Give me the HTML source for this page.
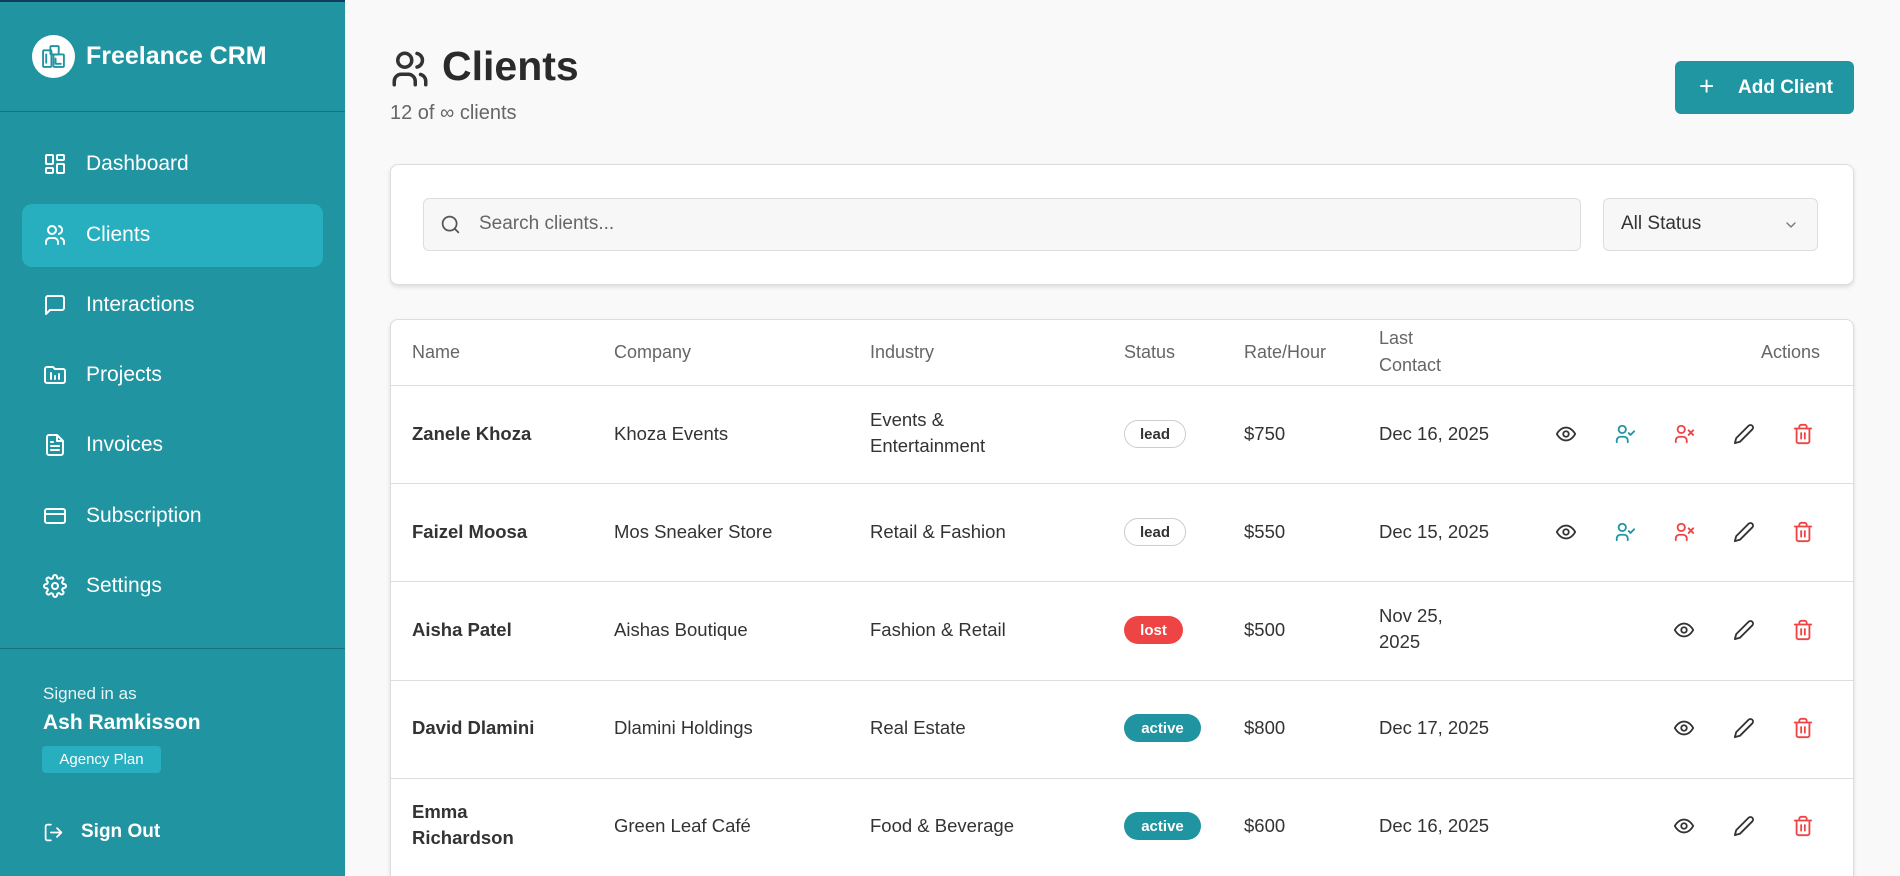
<!DOCTYPE html>
<html style="overflow:hidden;width:1900px;height:876px"><head><meta charset="utf-8"><style>
*{box-sizing:border-box;margin:0;padding:0}
body{width:1900px;height:876px;overflow:hidden;font-family:"Liberation Sans",sans-serif;background:#f9f9f9;position:relative;color:#222}
.abs{position:absolute}
#sb{position:absolute;left:0;top:0;width:345px;height:876px;background:#2094a0;border-top:2px solid #123c5a}
.nav{position:absolute;left:0;width:345px;height:40px;color:#fff;font-size:21px;display:flex;align-items:center}
.nav svg{position:absolute;left:43px}
.nav span{position:absolute;left:86px}
svg{fill:none;stroke-linecap:round;stroke-linejoin:round}
.hd{position:absolute;top:319px;height:66px;display:flex;align-items:center;color:#666;font-size:18px}
.row{position:absolute;left:391px;width:1462px;border-top:1px solid #ddd}
.c{position:absolute;font-size:18.5px;color:#333;line-height:26px}
.badge{position:absolute;height:28px;border-radius:14px;font-size:15px;font-weight:bold;display:flex;align-items:center;justify-content:center}
.ic{position:absolute}
</style></head><body>
<div id="sb">
 <div class="abs" style="left:32px;top:33px;width:43px;height:43px;border-radius:50%;background:#fff"></div>
 <svg class="abs" style="left:41px;top:42px" width="25" height="25" viewBox="0 0 24 24" stroke="#2094a0" stroke-width="1.8"><rect x="2" y="6" width="8" height="16" rx="1"/><rect x="9" y="2" width="8" height="8" rx="1"/><rect x="12" y="10" width="10" height="12" rx="1"/><path d="M5 10v8M14 14v5h5"/></svg>
 <div class="abs" style="left:86px;top:40px;color:#fff;font-size:25px;font-weight:bold">Freelance CRM</div>
 <div class="abs" style="left:0;top:109px;width:345px;height:1px;background:#17727d"></div>
 <div class="abs" style="left:22px;top:202px;width:301px;height:63px;border-radius:10px;background:#27afbf"></div>
 <div class="nav" style="top:142px"><svg width="24" height="24" viewBox="0 0 24 24" stroke="#fff" stroke-width="2"><rect x="3" y="3" width="7" height="9" rx="1"/><rect x="14" y="3" width="7" height="5" rx="1"/><rect x="14" y="12" width="7" height="9" rx="1"/><rect x="3" y="16" width="7" height="5" rx="1"/></svg><span>Dashboard</span></div>
 <div class="nav" style="top:213px"><svg width="24" height="24" viewBox="0 0 24 24" stroke="#fff" stroke-width="2"><circle cx="9" cy="7" r="4"/><path d="M3 21v-2a4 4 0 0 1 4-4h4a4 4 0 0 1 4 4v2M16 3.1a4 4 0 0 1 0 7.8M21 21v-2a4 4 0 0 0-3-3.9"/></svg><span>Clients</span></div>
 <div class="nav" style="top:283px"><svg width="24" height="24" viewBox="0 0 24 24" stroke="#fff" stroke-width="2"><path d="M21 15a2 2 0 0 1-2 2H7l-4 4V5a2 2 0 0 1 2-2h14a2 2 0 0 1 2 2z"/></svg><span>Interactions</span></div>
 <div class="nav" style="top:353px"><svg width="24" height="24" viewBox="0 0 24 24" stroke="#fff" stroke-width="2"><path d="M4 20h16a2 2 0 0 0 2-2V8a2 2 0 0 0-2-2h-8L10 4H4a2 2 0 0 0-2 2v12a2 2 0 0 0 2 2zM8 10v6M12 13v3M16 11v5"/></svg><span>Projects</span></div>
 <div class="nav" style="top:423px"><svg width="24" height="24" viewBox="0 0 24 24" stroke="#fff" stroke-width="2"><path d="M14 2H6a2 2 0 0 0-2 2v16a2 2 0 0 0 2 2h12a2 2 0 0 0 2-2V8zM14 2v6h6M16 13H8M16 17H8M10 9H8"/></svg><span>Invoices</span></div>
 <div class="nav" style="top:494px"><svg width="24" height="24" viewBox="0 0 24 24" stroke="#fff" stroke-width="2"><rect x="2" y="5" width="20" height="14" rx="2"/><path d="M2 10h20"/></svg><span>Subscription</span></div>
 <div class="nav" style="top:564px"><svg width="24" height="24" viewBox="0 0 24 24" stroke="#fff" stroke-width="2"><circle cx="12" cy="12" r="3"/><path d="M19.4 15a1.7 1.7 0 0 0 .3 1.8l.1.1a2 2 0 1 1-2.8 2.8l-.1-.1a1.7 1.7 0 0 0-1.8-.3 1.7 1.7 0 0 0-1 1.5V21a2 2 0 0 1-4 0v-.1a1.7 1.7 0 0 0-1.100-1.500 1.7 1.7 0 0 0-1.800.3l-.1.1a2 2 0 1 1-2.8-2.8l.1-.1a1.7 1.7 0 0 0 .3-1.8 1.7 1.7 0 0 0-1.5-1H3a2 2 0 0 1 0-4h.1a1.7 1.7 0 0 0 1.5-1.1 1.7 1.7 0 0 0-.3-1.8l-.1-.1a2 2 0 1 1 2.8-2.8l.1.1a1.7 1.7 0 0 0 1.8.3H9a1.7 1.7 0 0 0 1-1.5V3a2 2 0 0 1 4 0v.1a1.7 1.7 0 0 0 1 1.5 1.7 1.7 0 0 0 1.8-.3l.1-.1a2 2 0 1 1 2.8 2.8l-.1.1a1.7 1.7 0 0 0-.3 1.8V9a1.7 1.7 0 0 0 1.5 1H21a2 2 0 0 1 0 4h-.1a1.7 1.7 0 0 0-1.5 1z"/></svg><span>Settings</span></div>
 <div class="abs" style="left:0;top:646px;width:345px;height:1px;background:#17727d"></div>
 <div class="abs" style="left:43px;top:682px;color:#e6f6f8;font-size:17px">Signed in as</div>
 <div class="abs" style="left:43px;top:709px;color:#fff;font-size:21px;font-weight:bold">Ash Ramkisson</div>
 <div class="abs" style="left:42px;top:744px;width:119px;height:27px;border-radius:4px;background:#27afbf;color:#fff;font-size:15px;display:flex;align-items:center;justify-content:center">Agency Plan</div>
 <svg class="abs" style="left:43px;top:820px" width="21" height="21" viewBox="0 0 24 24" stroke="#fff" stroke-width="2"><path d="M9 21H5a2 2 0 0 1-2-2V5a2 2 0 0 1 2-2h4M16 17l5-5-5-5M21 12H9"/></svg>
 <div class="abs" style="left:81px;top:819px;color:#fff;font-size:19px;font-weight:bold">Sign Out</div>
</div>

<svg class="abs" style="left:389px;top:48px" width="42" height="42" viewBox="0 0 24 24" stroke="#333" stroke-width="2"><circle cx="9" cy="7" r="4"/><path d="M3 21v-2a4 4 0 0 1 4-4h4a4 4 0 0 1 4 4v2M16 3.1a4 4 0 0 1 0 7.8M21 21v-2a4 4 0 0 0-3-3.9"/></svg>
<div class="abs" style="left:442px;top:43px;font-size:41px;font-weight:bold;color:#2a2a2a">Clients</div>
<div class="abs" style="left:390px;top:102px;font-size:20px;color:#666">12 of ∞ clients</div>
<div class="abs" style="left:1675px;top:61px;width:179px;height:53px;border-radius:6px;background:#2196a3;color:#fff;font-size:19px;font-weight:bold;display:flex;align-items:center"><span style="position:absolute;left:24px;font-size:26px;font-weight:normal;top:10px">+</span><span style="position:absolute;left:63px">Add Client</span></div>

<div class="abs" style="left:390px;top:164px;width:1464px;height:121px;background:#fff;border:1px solid #ddd;border-radius:8px;box-shadow:0 2px 4px rgba(0,0,0,.12)"></div>
<div class="abs" style="left:423px;top:198px;width:1158px;height:53px;background:#f7f7f7;border:1px solid #ddd;border-radius:6px"></div>
<svg class="abs" style="left:440px;top:214px" width="21" height="21" viewBox="0 0 24 24" stroke="#555" stroke-width="2"><circle cx="11" cy="11" r="8"/><path d="M21 21l-4.3-4.3"/></svg>
<div class="abs" style="left:479px;top:213px;font-size:19px;color:#666">Search clients...</div>
<div class="abs" style="left:1603px;top:198px;width:215px;height:53px;background:#f7f7f7;border:1px solid #ddd;border-radius:6px"></div>
<div class="abs" style="left:1621px;top:213px;font-size:19px;color:#333">All Status</div>
<svg class="abs" style="left:1783px;top:217px" width="16" height="16" viewBox="0 0 24 24" stroke="#777" stroke-width="2"><path d="M6 9l6 6 6-6"/></svg>

<div class="abs" style="left:390px;top:319px;width:1464px;height:557px;background:#fff;border:1px solid #ddd;border-bottom:none;border-radius:8px 8px 0 0;box-shadow:0 2px 4px rgba(0,0,0,.12)"></div>
<div class="hd" style="left:412px">Name</div>
<div class="hd" style="left:614px">Company</div>
<div class="hd" style="left:870px">Industry</div>
<div class="hd" style="left:1124px">Status</div>
<div class="hd" style="left:1244px">Rate/Hour</div>
<div class="hd" style="left:1379px;line-height:27px">Last<br>Contact</div>
<div class="hd" style="left:1761px">Actions</div>

<div class="row" style="top:385px"></div>
<div class="row" style="top:483px"></div>
<div class="row" style="top:581px"></div>
<div class="row" style="top:680px"></div>
<div class="row" style="top:778px"></div>

<div class="c" style="left:412px;top:421px;font-weight:bold">Zanele Khoza</div>
<div class="c" style="left:614px;top:421px">Khoza Events</div>
<div class="c" style="left:870px;top:407px">Events &amp;<br>Entertainment</div>
<div class="badge" style="left:1124px;top:420px;width:62px;border:1px solid #ccc;color:#333;background:#fff">lead</div>
<div class="c" style="left:1244px;top:421px">$750</div>
<div class="c" style="left:1379px;top:421px">Dec 16, 2025</div>

<div class="c" style="left:412px;top:519px;font-weight:bold">Faizel Moosa</div>
<div class="c" style="left:614px;top:519px">Mos Sneaker Store</div>
<div class="c" style="left:870px;top:519px">Retail &amp; Fashion</div>
<div class="badge" style="left:1124px;top:518px;width:62px;border:1px solid #ccc;color:#333;background:#fff">lead</div>
<div class="c" style="left:1244px;top:519px">$550</div>
<div class="c" style="left:1379px;top:519px">Dec 15, 2025</div>

<div class="c" style="left:412px;top:617px;font-weight:bold">Aisha Patel</div>
<div class="c" style="left:614px;top:617px">Aishas Boutique</div>
<div class="c" style="left:870px;top:617px">Fashion &amp; Retail</div>
<div class="badge" style="left:1124px;top:616px;width:59px;background:#ef4444;color:#fff">lost</div>
<div class="c" style="left:1244px;top:617px">$500</div>
<div class="c" style="left:1379px;top:603px">Nov 25,<br>2025</div>

<div class="c" style="left:412px;top:715px;font-weight:bold">David Dlamini</div>
<div class="c" style="left:614px;top:715px">Dlamini Holdings</div>
<div class="c" style="left:870px;top:715px">Real Estate</div>
<div class="badge" style="left:1124px;top:714px;width:77px;background:#2094a0;color:#fff">active</div>
<div class="c" style="left:1244px;top:715px">$800</div>
<div class="c" style="left:1379px;top:715px">Dec 17, 2025</div>

<div class="c" style="left:412px;top:799px;font-weight:bold">Emma<br>Richardson</div>
<div class="c" style="left:614px;top:813px">Green Leaf Café</div>
<div class="c" style="left:870px;top:813px">Food &amp; Beverage</div>
<div class="badge" style="left:1124px;top:812px;width:77px;background:#2094a0;color:#fff">active</div>
<div class="c" style="left:1244px;top:813px">$600</div>
<div class="c" style="left:1379px;top:813px">Dec 16, 2025</div>

<svg width="0" height="0" style="position:absolute">
<defs>
<g id="eye"><path d="M2 12s3.5-7 10-7 10 7 10 7-3.5 7-10 7S2 12 2 12z"/><circle cx="12" cy="12" r="3"/></g>
<g id="uc"><circle cx="9" cy="7" r="4"/><path d="M3 21v-2a4 4 0 0 1 4-4h4a4 4 0 0 1 4 4v2M16 11l2 2 4-4"/></g>
<g id="ux"><circle cx="9" cy="7" r="4"/><path d="M3 21v-2a4 4 0 0 1 4-4h4a4 4 0 0 1 4 4v2M17 8l5 5M22 8l-5 5"/></g>
<g id="pen"><path d="M17 3a2.8 2.8 0 1 1 4 4L7.5 20.5 2 22l1.5-5.5z"/></g>
<g id="tr"><path d="M3 6h18M19 6v14a2 2 0 0 1-2 2H7a2 2 0 0 1-2-2V6M8 6V4a2 2 0 0 1 2-2h4a2 2 0 0 1 2 2v2M10 11v6M14 11v6"/></g>
</defs></svg>

<svg class="ic" style="left:1555px;top:423px" width="22" height="22" viewBox="0 0 24 24" stroke="#333" stroke-width="2"><use href="#eye"/></svg>
<svg class="ic" style="left:1614px;top:423px" width="22" height="22" viewBox="0 0 24 24" stroke="#2196a3" stroke-width="2"><use href="#uc"/></svg>
<svg class="ic" style="left:1673px;top:423px" width="22" height="22" viewBox="0 0 24 24" stroke="#ef4444" stroke-width="2"><use href="#ux"/></svg>
<svg class="ic" style="left:1733px;top:423px" width="22" height="22" viewBox="0 0 24 24" stroke="#333" stroke-width="2"><use href="#pen"/></svg>
<svg class="ic" style="left:1792px;top:423px" width="22" height="22" viewBox="0 0 24 24" stroke="#ef4444" stroke-width="2"><use href="#tr"/></svg>

<svg class="ic" style="left:1555px;top:521px" width="22" height="22" viewBox="0 0 24 24" stroke="#333" stroke-width="2"><use href="#eye"/></svg>
<svg class="ic" style="left:1614px;top:521px" width="22" height="22" viewBox="0 0 24 24" stroke="#2196a3" stroke-width="2"><use href="#uc"/></svg>
<svg class="ic" style="left:1673px;top:521px" width="22" height="22" viewBox="0 0 24 24" stroke="#ef4444" stroke-width="2"><use href="#ux"/></svg>
<svg class="ic" style="left:1733px;top:521px" width="22" height="22" viewBox="0 0 24 24" stroke="#333" stroke-width="2"><use href="#pen"/></svg>
<svg class="ic" style="left:1792px;top:521px" width="22" height="22" viewBox="0 0 24 24" stroke="#ef4444" stroke-width="2"><use href="#tr"/></svg>

<svg class="ic" style="left:1673px;top:619px" width="22" height="22" viewBox="0 0 24 24" stroke="#333" stroke-width="2"><use href="#eye"/></svg>
<svg class="ic" style="left:1733px;top:619px" width="22" height="22" viewBox="0 0 24 24" stroke="#333" stroke-width="2"><use href="#pen"/></svg>
<svg class="ic" style="left:1792px;top:619px" width="22" height="22" viewBox="0 0 24 24" stroke="#ef4444" stroke-width="2"><use href="#tr"/></svg>

<svg class="ic" style="left:1673px;top:717px" width="22" height="22" viewBox="0 0 24 24" stroke="#333" stroke-width="2"><use href="#eye"/></svg>
<svg class="ic" style="left:1733px;top:717px" width="22" height="22" viewBox="0 0 24 24" stroke="#333" stroke-width="2"><use href="#pen"/></svg>
<svg class="ic" style="left:1792px;top:717px" width="22" height="22" viewBox="0 0 24 24" stroke="#ef4444" stroke-width="2"><use href="#tr"/></svg>

<svg class="ic" style="left:1673px;top:815px" width="22" height="22" viewBox="0 0 24 24" stroke="#333" stroke-width="2"><use href="#eye"/></svg>
<svg class="ic" style="left:1733px;top:815px" width="22" height="22" viewBox="0 0 24 24" stroke="#333" stroke-width="2"><use href="#pen"/></svg>
<svg class="ic" style="left:1792px;top:815px" width="22" height="22" viewBox="0 0 24 24" stroke="#ef4444" stroke-width="2"><use href="#tr"/></svg>
</body></html>
